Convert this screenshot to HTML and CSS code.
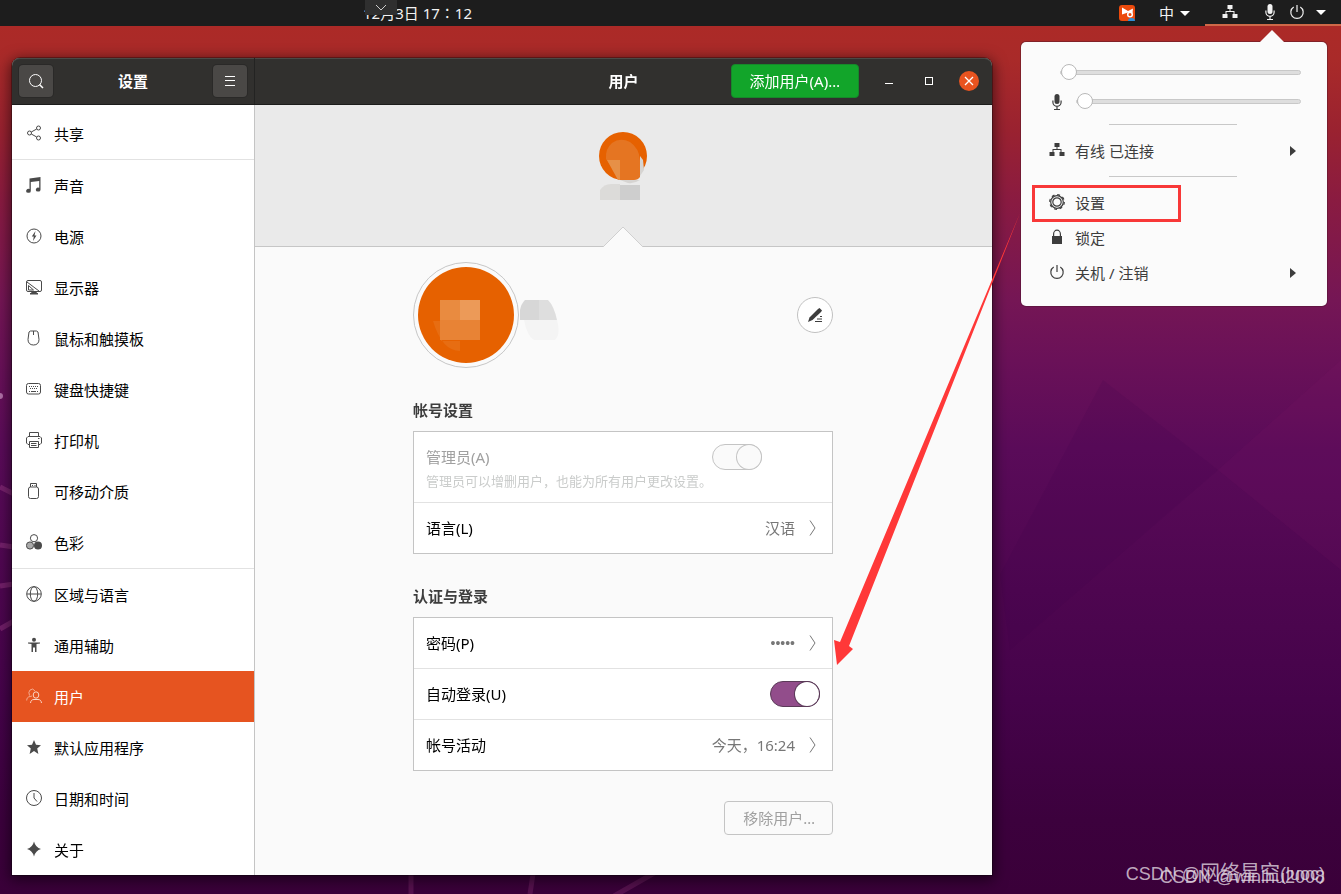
FILE: index.html
```html
<!DOCTYPE html>
<html lang="zh-CN">
<head>
<meta charset="utf-8">
<title>设置 - 用户</title>
<link rel="stylesheet" href="styles.css">
</head>
<body>
<svg class="defs" aria-hidden="true">
  <symbol id="network" viewBox="0 0 16 16"><path d="M5.500 1h5v4h-2v2h4v3H15.500v4h-5v-4h1V8h-7v2h1v4h-5v-4h3V7h4V5h-2z" fill="currentColor"/></symbol>
  <symbol id="mic" viewBox="0 0 16 16"><rect x="5.500" y="0" width="5" height="10" rx="2.500" fill="currentColor"/><path d="M3.900 6.500v1.800a4.100 4 0 0 0 8.200 0V6.500M8 12.500v3M5 15.500h6" fill="none" stroke="currentColor" stroke-width="1.200"/></symbol>
  <symbol id="power" viewBox="0 0 16 16"><path d="M4.700 3A6.200 6.200 0 1 0 11.300 3M8 1v7" fill="none" stroke="currentColor" stroke-width="1.200"/></symbol>
  <symbol id="gear" viewBox="0 0 16 16"><circle cx="8" cy="8" r="6.300" fill="none" stroke="currentColor" stroke-width="1.200"/><circle cx="8" cy="8" r="7.300" fill="none" stroke="currentColor" stroke-width="1.200" stroke-dasharray="2.900 2.830"/><circle cx="8" cy="8" r="4.200" fill="none" stroke="currentColor" stroke-width="1.200"/></symbol>
  <symbol id="lock" viewBox="0 0 16 16"><path d="M3 7h10v8H3z" fill="currentColor"/><path d="M4.600 7V5a3.400 3.800 0 0 1 6.800 0v2" fill="none" stroke="currentColor" stroke-width="1.200"/></symbol>
  <symbol id="share" viewBox="0 0 16 16"><g fill="none" stroke="currentColor"><circle cx="3.500" cy="8" r="2"/><circle cx="12.500" cy="3" r="2"/><circle cx="12.500" cy="13" r="2"/><path d="M5.300 7l5.400-3M5.300 9l5.400 3"/></g></symbol>
  <symbol id="note" viewBox="0 0 16 16"><path d="M3.500 1.500L14.500 0v12.500a2.300 2 0 1 1-1.300-1.700V4L4.800 5v8.700A2.300 2 0 1 1 3.500 12z" fill="currentColor"/></symbol>
  <symbol id="energy" viewBox="0 0 16 16"><circle cx="8" cy="8" r="7" fill="none" stroke="currentColor"/><path d="M9.500 3L5.800 8.500h2L7 13l3.500-5.500h-2z" fill="currentColor"/></symbol>
  <symbol id="display" viewBox="0 0 16 16"><rect x=".5" y="1.500" width="15" height="11" rx="1.500" fill="none" stroke="currentColor"/><path d="M1 3l12 9M2.500 6.500v4.500h5z" fill="none" stroke="currentColor"/><path d="M6 12h4l1 2h1v1.500H4V14h1z" fill="currentColor"/></symbol>
  <symbol id="mouse" viewBox="0 0 16 16"><path d="M4.500 1h6l1.500 1 1 7.500c0 3.500-2 5.500-5.500 5.500S2 13 2 9.500L3 2zM7.500 1v4" fill="none" stroke="currentColor"/></symbol>
  <symbol id="keyboard" viewBox="0 0 16 16"><rect x=".5" y="2.500" width="14" height="10.500" rx="2" fill="none" stroke="currentColor"/><path d="M3 5.500h10M4 7.500h8" fill="none" stroke="currentColor" stroke-dasharray="1 1"/><path d="M3 10.500h1m1 0h5m1 0h1" fill="none" stroke="currentColor"/></symbol>
  <symbol id="printer" viewBox="0 0 16 16"><path d="M3.500 4.500v-4h9v4M3.500 12.500H2L.5 11V6L2 4.500h12L15.500 6v5L14 12.500h-1.500M3.500 9.500h9v6h-9zM5 11.500h5.500M5 13.500h5.500M12 6.500h1.500" fill="none" stroke="currentColor"/></symbol>
  <symbol id="usb" viewBox="0 0 16 16"><path d="M4.500 4V.5h6V4M6 2.500h1m1.500 0h1" fill="none" stroke="currentColor"/><rect x="2.500" y="4" width="10" height="11.500" rx="2" fill="none" stroke="currentColor"/></symbol>
  <symbol id="colors" viewBox="0 0 16 16"><circle cx="8" cy="4.200" r="3.600" fill="#fff" stroke="currentColor"/><circle cx="4" cy="11.500" r="3.600" fill="#aaa" stroke="currentColor"/><circle cx="12" cy="11.500" r="4" fill="currentColor"/></symbol>
  <symbol id="globe" viewBox="0 0 16 16"><g fill="none" stroke="currentColor"><circle cx="8" cy="8" r="7.300"/><ellipse cx="8" cy="8" rx="3.700" ry="7.300"/><path d="M1 8h14"/></g></symbol>
  <symbol id="person" viewBox="0 0 16 16"><circle cx="8" cy="2.700" r="2" fill="currentColor"/><path d="M2 5.500h12V6.500l-3.500.5V15H9v-4.500H7V15H5.500V7L2 6.500z" fill="currentColor"/></symbol>
  <symbol id="users" viewBox="0 0 16 16"><g fill="none" stroke="currentColor"><ellipse cx="10" cy="7" rx="2.800" ry="3.200"/><path d="M4.500 15c.3-2.500 1.500-3.500 3.500-3.500h4c2 0 3.200 1 3.500 3.500"/><path d="M7.500 5.500M3.500 7.500Q2 4 4 2q3-2.500 5 1M.7 12.500C.8 10 1.700 9 4 8.500l2-.5" opacity=".65"/></g></symbol>
  <symbol id="star" viewBox="0 0 16 16"><path d="M8 1l2 4.800 5 .4-3.800 3.400L12.400 15 8 12l-4.400 3 1.200-5.400L1 6.200l5-.4z" fill="currentColor"/></symbol>
  <symbol id="clock" viewBox="0 0 16 16"><circle cx="8" cy="8" r="7.500" fill="none" stroke="currentColor"/><path d="M8 3v5l3 3.500" fill="none" stroke="currentColor"/></symbol>
  <symbol id="spark" viewBox="0 0 16 16"><path d="M8 .5Q9.500 6.500 15 8 9.500 9.500 8 15.500 6.500 9.500 1 8 6.500 6.500 8 .5z" fill="currentColor"/></symbol>
  <symbol id="chevron" viewBox="0 0 8 16"><path d="M1 .5L6 8l-5 7.500" fill="none" stroke="currentColor"/></symbol>
</svg>

<div class="desktop">
  <svg class="wallpaper" viewBox="0 0 1341 894" preserveAspectRatio="none" aria-hidden="true">
    <polygon points="1103,380 1218,470 1010,650 1000,575" fill="#3c0048" opacity=".12"/>
    <polygon points="1341,360 1218,470 1341,570" fill="#8a206a" opacity=".1"/>
    <g fill="none" stroke="#a04088" opacity=".45"><path d="M0 487l14 7M0 545l14 2M0 586l14-2M0 629l14-8" stroke-width="5"/><path d="M411 874v20M533 874l-3 20M656 872l-42 24" stroke-width="5" opacity=".6"/></g>
    <circle cx="0" cy="396" r="3" fill="#b070a8"/>
  </svg>

  <header class="topbar">
    <time class="clock-text">12月3日 17∶12</time>
    <div class="tray">
      <svg class="icon input-app" viewBox="0 0 16 16"><rect width="16" height="16" rx="3" fill="#ec4a0c"/><path d="M3 2.500L9 6l5-2.500-.5 4.500L9 7.500 3 9.500z" fill="#fff"/><circle cx="11" cy="9.500" r="2.300" fill="none" stroke="#fff" stroke-width="1.500"/><path d="M9 16q0-3 3.500-3t3.500 3z" fill="#2e8fd8"/></svg>
      <button class="lang">中<span class="caret"></span></button>
      <button class="status" aria-label="系统菜单" aria-expanded="true">
        <svg class="icon"><use href="#network"/></svg>
        <svg class="icon mic"><use href="#mic"/></svg>
        <svg class="icon"><use href="#power"/></svg>
        <span class="caret"></span>
      </button>
    </div>
    <button class="pull-tab" aria-label="展开"><svg width="12" height="7" viewBox="0 0 12 7"><path d="M1 1l5 5 5-5" fill="none" stroke="#ccc"/></svg></button>
  </header>

  <main class="window">
    <div class="titlebar">
      <div class="title-side">
        <button class="tool" aria-label="搜索"><svg class="icon" viewBox="0 0 16 16"><circle cx="7.500" cy="7.500" r="6" fill="none" stroke="#fff"/><path d="M11.500 11.500l3.500 3.500" stroke="#fff" stroke-width="1.500"/></svg></button>
        <h1>设置</h1>
        <button class="tool" aria-label="菜单"><svg class="icon" viewBox="0 0 16 16"><path d="M3 3.500h10M3 7.500h10M3 12.500h10" stroke="#fff"/></svg></button>
      </div>
      <div class="title-main">
        <h2 class="page-title">用户</h2>
        <div class="window-actions">
          <button class="add-user">添加用户(A)…</button>
          <button class="control" aria-label="最小化"><svg width="10" height="10" viewBox="0 0 10 10"><path d="M1 7.500h8" stroke="#fff"/></svg></button>
          <button class="control" aria-label="最大化"><svg width="10" height="10" viewBox="0 0 10 10"><rect x="1.500" y="1.500" width="7" height="7" fill="none" stroke="#fff"/></svg></button>
          <button class="control close" aria-label="关闭"><svg width="10" height="10" viewBox="0 0 10 10"><path d="M1 1l8 8M9 1L1 9" stroke="#fff" stroke-width="1.300"/></svg></button>
        </div>
      </div>
    </div>

    <div class="window-body">
      <nav class="sidebar">
        <a href="#" class="ruled"><svg class="icon"><use href="#share"/></svg>共享</a>
        <a href="#"><svg class="icon"><use href="#note"/></svg>声音</a>
        <a href="#"><svg class="icon"><use href="#energy"/></svg>电源</a>
        <a href="#"><svg class="icon"><use href="#display"/></svg>显示器</a>
        <a href="#"><svg class="icon"><use href="#mouse"/></svg>鼠标和触摸板</a>
        <a href="#"><svg class="icon"><use href="#keyboard"/></svg>键盘快捷键</a>
        <a href="#"><svg class="icon"><use href="#printer"/></svg>打印机</a>
        <a href="#"><svg class="icon"><use href="#usb"/></svg>可移动介质</a>
        <a href="#" class="ruled"><svg class="icon"><use href="#colors"/></svg>色彩</a>
        <a href="#"><svg class="icon"><use href="#globe"/></svg>区域与语言</a>
        <a href="#"><svg class="icon"><use href="#person"/></svg>通用辅助</a>
        <a href="#" class="selected" aria-current="page"><svg class="icon"><use href="#users"/></svg>用户</a>
        <a href="#"><svg class="icon"><use href="#star"/></svg>默认应用程序</a>
        <a href="#"><svg class="icon"><use href="#clock"/></svg>日期和时间</a>
        <a href="#"><svg class="icon"><use href="#spark"/></svg>关于</a>
      </nav>

      <section class="content">
        <div class="carousel">
          <svg width="48" height="68" viewBox="0 0 48 68" role="img" aria-label="用户头像">
            <circle cx="24" cy="24" r="24" fill="#e66100"/>
            <path d="M41 24l3 4 1 10-4 6v4q-6 4-12 3l-8-3h20z" fill="#d6d4d2"/>
            <path d="M0 68z M7 27Q6 17 13 11q8-6 18-1 9 6 10 18v17q-2 3-6 3H21L14 37z" fill="#e57522"/>
            <path d="M8 28h13v20h-2L14 39z" fill="#e69047"/>
            <path d="M1 68V58q4-6 11-6h9v16z" fill="#dcdbd9"/><path d="M21 53h20v15H21z" fill="#cecece"/>
          </svg>
          <svg class="pointer" width="40" height="21" viewBox="0 0 40 21" aria-hidden="true"><path d="M0 21L20 1l20 20z" fill="#fafafa"/><path d="M0 21L20 1l20 20" fill="none" stroke="#d0d0d0"/></svg>
        </div>

        <div class="column">
          <div class="profile">
            <button class="avatar" aria-label="更换头像">
              <svg width="96" height="96" viewBox="0 0 96 96"><circle cx="48" cy="48" r="48" fill="#e66100"/><path d="M15 54h8v20h19v10Q24 84 15 54z" fill="#e76d12"/><path d="M22 33h20v20H22z" fill="#e98b40"/><path d="M42 33h20v20H42z" fill="#ec9a58"/><path d="M22 53h40v20H22z" fill="#e88335"/></svg>
            </button>
            <svg class="name" width="40" height="42" viewBox="0 0 40 42" aria-hidden="true"><path d="M6 0h14v20H1V10Q2 4 6 0z" fill="#d7d7d7"/><path d="M20 0h9q6 6 9 20H20z" fill="#dedede"/><path d="M5 20h33q4 14-2 20H15Q8 36 5 20z" fill="#f4f4f4"/></svg>
            <button class="edit" aria-label="编辑姓名"><svg class="icon" viewBox="0 0 16 16"><path d="M1 15l1.500-4.500L11 2l1.500-1L15 3.500 14 5l-8.500 8z" fill="#3d3d3d"/><path d="M8 14.500h7M10 12h5M13 9.500h2" stroke="#3d3d3d"/></svg></button>
          </div>

          <h2 class="group-title">帐号设置</h2>
          <div class="list">
            <div class="row admin">
              <div><label for="admin">管理员(A)</label><p>管理员可以增删用户，也能为所有用户更改设置。</p></div>
              <input id="admin" class="switch" type="checkbox" checked disabled>
            </div>
            <button class="row">语言(L)<span class="value">汉语</span><svg class="chevron"><use href="#chevron"/></svg></button>
          </div>

          <h2 class="group-title">认证与登录</h2>
          <div class="list">
            <button class="row">密码(P)<span class="value dots">•••••</span><svg class="chevron"><use href="#chevron"/></svg></button>
            <div class="row"><label for="autologin">自动登录(U)</label><input id="autologin" class="switch" type="checkbox" checked></div>
            <button class="row">帐号活动<span class="value">今天，16:24</span><svg class="chevron"><use href="#chevron"/></svg></button>
          </div>
          <button class="remove" disabled>移除用户…</button>
        </div>
      </section>
    </div>
  </main>

  <svg class="arrow" width="190" height="455" viewBox="0 0 190 455" aria-hidden="true"><path d="M190 3L19 436l4 3L7 455 4 430l6 2z" fill="#ff3838"/></svg>

  <aside class="menu" aria-label="系统菜单">
    <div class="slider"><input type="range" min="0" max="100" value="0" class="volume" aria-label="音量"></div>
    <div class="slider"><svg class="icon"><use href="#mic"/></svg><input type="range" min="0" max="100" value="0" aria-label="麦克风"></div>
    <hr>
    <button class="item"><svg class="icon"><use href="#network"/></svg>有线 已连接<span class="more"></span></button>
    <hr>
    <button class="item marked"><svg class="icon"><use href="#gear"/></svg>设置</button>
    <button class="item"><svg class="icon"><use href="#lock"/></svg>锁定</button>
    <button class="item"><svg class="icon"><use href="#power"/></svg>关机 / 注销<span class="more"></span></button>
  </aside>

  <p class="watermark first">CSDN @<span>网络星空</span>(luoc)</p>
  <p class="watermark second">CSDN @winlhu2008</p>
</div>
</body>
</html>
```
FILE: styles.css
```css
* { box-sizing: border-box; }
html, body { height: 100%; }
body {
  margin: 0;
  font: 15px/24px "Noto Sans", "Noto Sans CJK SC", sans-serif;
  color: #000;
}
h1, h2, p { margin: 0; }
button {
  padding: 0;
  border: 0;
  background: none;
  color: inherit;
  font: inherit;
}
a { color: inherit; text-decoration: none; }
.defs { position: absolute; width: 0; height: 0; }
.icon { flex: none; width: 16px; height: 16px; display: block; }

.desktop {
  position: relative;
  min-height: 100%;
  overflow: hidden;
  background: linear-gradient(#ac2a27 26px, #a92a29 60px, #9a2230 130px, #8a1b41 200px, #751655 300px, #6a1158 360px, #5a0b59 450px, #4e0650 590px, #45034a 700px, #3c013d 820px, #3a0039 894px);
}
.wallpaper { position: absolute; inset: 0; width: 100%; height: 100%; }

/* top bar */
.topbar {
  position: relative;
  display: flex;
  justify-content: space-between;
  height: 26px;
  padding-left: 363px;
  background: #1d1d1d;
  color: #f2f2f2;
}
.clock-text { line-height: 26px; white-space: pre; }
.tray { display: flex; align-items: center; }
.input-app { margin-right: 24px; }
.lang { display: flex; align-items: center; gap: 6px; margin-right: 15px; line-height: 26px; }
.caret { border: 5px solid transparent; border-top-color: #fff; border-bottom: 0; }
.status {
  display: flex;
  align-items: center;
  gap: 11px;
  height: 26px;
  padding: 0 15px 0 17px;
  border-bottom: 2px solid #cf6848;
}
.status .mic { margin-left: 13px; }
.pull-tab {
  position: absolute;
  left: 365px;
  top: 0;
  width: 32px;
  height: 15px;
  background: #2f2f2f;
  line-height: 0;
}

/* settings window */
.window {
  position: absolute;
  inset: 58px 349px 19px 12px;
  display: flex;
  flex-direction: column;
  border-radius: 8px 8px 0 0;
  background: #fafafa;
  box-shadow: 0 0 0 1px rgba(0, 0, 0, .3), 0 3px 14px 2px rgba(0, 0, 0, .55);
}
.titlebar {
  display: flex;
  flex: none;
  height: 47px;
  border-bottom: 1px solid #1c1c1b;
  border-radius: 8px 8px 0 0;
  background: #31302e;
  box-shadow: inset 0 1px #4a4946;
  color: #fff;
}
.title-side {
  display: flex;
  align-items: center;
  justify-content: space-between;
  width: 243px;
  padding: 0 7px;
  border-right: 1px solid #232322;
}
h1, .page-title { font-size: 15px; font-weight: 700; }
.tool {
  display: grid;
  place-items: center;
  width: 34px;
  height: 32px;
  border-radius: 4px;
  background: #4a4846;
  box-shadow: 0 0 0 1px #2a2928;
}
.title-main {
  flex: 1;
  display: grid;
  grid-template-columns: 1fr auto 1fr;
  align-items: center;
}
.page-title { grid-column: 2; }
.window-actions { display: flex; align-items: center; justify-content: flex-end; gap: 20px; padding-right: 13px; }
.add-user {
  flex: none;
  padding: 0 18px;
  height: 34px;
  border-radius: 4px;
  border: 1px solid #16892a;
  background: #12a52a;
  white-space: nowrap;
}
.control { display: grid; place-items: center; width: 20px; height: 20px; border-radius: 50%; }
.close { background: #e95420; }

.window-body { flex: 1; display: flex; min-height: 0; }
.sidebar {
  width: 243px;
  padding-top: 3px;
  border-right: 1px solid #c4c4c4;
  background: #fff;
}
.sidebar a {
  display: flex;
  align-items: center;
  gap: 12px;
  height: 51px;
  padding: 0 14px;
}
.sidebar .icon { color: #4a4a4a; margin-bottom: 2px; }
.sidebar a.ruled { height: 52px; border-bottom: 1px solid #e2e2e2; }
.sidebar a.selected { background: #e65420; color: #fff; }
.sidebar .selected .icon { color: #fbd5c6; }

.content { flex: 1; min-width: 0; }
.carousel {
  position: relative;
  display: flex;
  justify-content: center;
  height: 142px;
  padding: 27px 1px 0 0;
  border-bottom: 1px solid #c6c6c6;
  background: #eaeaea;
}
.pointer { position: absolute; left: 50%; bottom: -1px; margin-left: -21px; }
.column {
  display: flex;
  flex-direction: column;
  width: 421px;
  max-width: 100%;
  margin: 0 auto;
  padding: 15px 1px 0 0;
}
.profile { display: flex; align-items: center; }
.name { margin-top: 12px; }
.avatar { padding: 4px; border: 1px solid #c6c6c6; border-radius: 50%; line-height: 0; }
.edit {
  display: grid;
  place-items: center;
  width: 36px;
  height: 36px;
  margin-left: auto;
  border: 1px solid #c0c0c0;
  border-radius: 50%;
  background: #fff;
}
.group-title { margin: 30px 0 9px; font-size: 15px; line-height: 24px; color: #3d3d3d; }
.list { border: 1px solid #c4c4c4; background: #fff; }
.row {
  display: flex;
  align-items: center;
  width: 100%;
  min-height: 50px;
  padding: 0 12px;
  text-align: left;
}
.row + .row { border-top: 1px solid #e2e2e2; min-height: 51px; }
.row label { flex: 1; }
.value { margin-left: auto; margin-right: 14px; color: #777; }
.dots { font-family: "Liberation Sans", sans-serif; font-size: 14px; }
.chevron { width: 8px; height: 16px; margin-right: 3px; color: #777; }
.admin { align-items: flex-start; padding: 12px 12px 10px; min-height: 70px; color: #a0a0a0; }
.admin label { display: block; line-height: 26px; }
.admin p { font-size: 13px; line-height: 22px; color: #cacccb; }
.switch {
  appearance: none;
  flex: none;
  display: flex;
  justify-content: flex-end;
  width: 50px;
  height: 26px;
  margin: 0;
  border: 1px solid #5b3a58;
  border-radius: 13px;
  background: #924d8b;
}
.switch::before {
  content: "";
  width: 24px;
  height: 24px;
  border-radius: 50%;
  background: #fff;
  box-shadow: 0 0 0 1px #5b3a58;
}
.switch:disabled { border-color: #c4c4c4; background: #fafafa; }
.switch:disabled::before { background: #fafafa; box-shadow: 0 0 0 1px #c4c4c4; }
.remove {
  align-self: flex-end;
  height: 34px;
  margin-top: 30px;
  padding: 0 17px 0 18px;
  border: 1px solid #c4c4c4;
  border-radius: 4px;
  color: #a0a0a0;
}

/* system menu */
.menu {
  position: absolute;
  top: 42px;
  right: 14px;
  width: 306px;
  padding: 16px 0;
  border-radius: 5px;
  background: #fbfbfb;
  box-shadow: 0 0 0 1px rgba(70, 20, 40, .4);
  color: #3d3d3d;
}
.menu::before {
  content: "";
  position: absolute;
  top: -12px;
  right: 43px;
  border: 12px solid transparent;
  border-top: 0;
  border-bottom-color: #fbfbfb;
}
.slider { display: flex; align-items: center; gap: 11px; height: 29px; padding: 0 26px 0 28px; }
.slider input {
  appearance: none;
  flex: 1;
  min-width: 0;
  height: 16px;
  margin: 0;
  background: none;
}
.slider .volume { margin-left: 11px; }
.slider input::-webkit-slider-runnable-track {
  height: 5px;
  border: 1px solid #c8c8c8;
  border-radius: 3px;
  background: #dedede;
}
.slider input::-webkit-slider-thumb {
  appearance: none;
  width: 16px;
  height: 16px;
  margin-top: -7px;
  border: 1px solid #b8b8b8;
  border-radius: 50%;
  background: #fff;
}
.menu hr { width: 128px; height: 1px; margin: 8px 0 8px 88px; border: 0; background: #c8c8c8; }
.item {
  position: relative;
  display: flex;
  align-items: center;
  gap: 10px;
  width: 100%;
  height: 35px;
  padding: 0 31px 0 28px;
  text-align: left;
}
.item .icon { margin-bottom: 2px; }
.more { margin-left: auto; border: 5px solid transparent; border-left: 6px solid #3d3d3d; border-right: 0; }
.marked::after { content: ""; position: absolute; inset: 0 146px -2px 11px; border: 3px solid #f83838; }

.arrow { position: absolute; left: 830px; top: 210px; pointer-events: none; }
.watermark {
  position: absolute;
  right: 16px;
  font: 18px/24px "Liberation Sans", "Noto Sans CJK SC", sans-serif;
  color: rgba(225, 215, 225, .8);
  white-space: nowrap;
}
.watermark span { font-size: 20px; }
.first { bottom: 8px; }
.second { bottom: 5px; }
```
